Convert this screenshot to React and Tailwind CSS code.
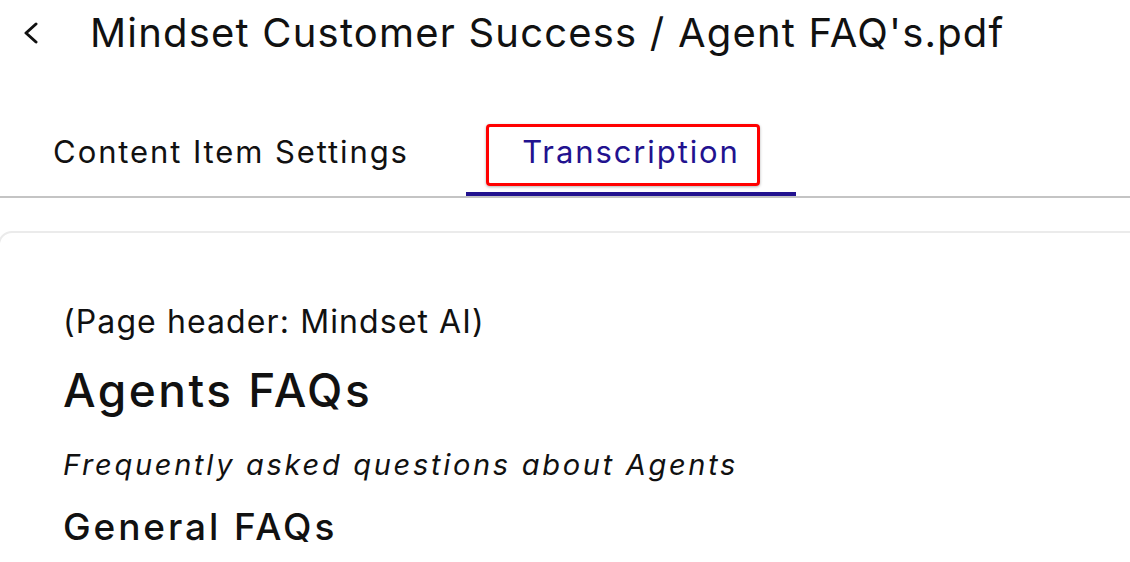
const font = { fontFamily: 'Inter, "Noto Sans", sans-serif' };

function Back() {
    return (
        <svg className="ml-[23px] w-[16px] h-[22px]" viewBox="0 0 16 22" fill="none" stroke="#111" strokeWidth="3" strokeLinecap="round" strokeLinejoin="round">
            <polyline points="13,2 3,11 13,20" />
        </svg>
    );
}

export default function App() {
    return (
        <div className="w-[1130px] h-[562px] overflow-hidden bg-white text-[#111]" style={font}>
            <header className="h-[65px] flex items-center">
                <Back />
                <h1 className="ml-[51px] text-[40px] leading-[48px] font-normal tracking-[1.2px] whitespace-nowrap">
                    Mindset Customer Success / Agent FAQ's.pdf
                </h1>
            </header>

            <nav className="mt-[67px] flex border-b-2 border-[#c4c4c4]">
                <button className="-ml-[4px] w-[470px] pb-[20px] leading-[40px] text-[31px] tracking-[1.9px] border-b-4 border-transparent">
                    Content Item Settings
                </button>
                <button className="relative w-[330px] pb-[20px] leading-[40px] text-[31px] tracking-[1.9px] text-[#22128f] border-b-4 border-[#22128f]">
                    Transcription
                    <span className="absolute left-[20px] top-[-8px] w-[274px] h-[62px] border-[3px] border-[#ff0000] rounded-[4px] shadow-[0_1px_3px_rgba(0,0,0,0.3)]" />
                </button>
            </nav>

            <section className="mt-[33px] -ml-[2px] w-[1170px] rounded-[14px] border-2 border-[#ebebeb] pl-[63px] pt-[69px] h-[400px]">
                <p className="text-[32px] leading-[40px] tracking-[1.1px]">(Page header: Mindset AI)</p>
                <h2 className="mt-[22px] text-[46px] leading-[52px] font-medium tracking-[2.5px]">Agents FAQs</h2>
                <p className="mt-[29px] text-[29px] leading-[40px] italic tracking-[2.7px]">Frequently asked questions about Agents</p>
                <h3 className="mt-[20px] text-[37px] leading-[44px] font-medium tracking-[2.9px]">General FAQs</h3>
            </section>
        </div>
    );
}
